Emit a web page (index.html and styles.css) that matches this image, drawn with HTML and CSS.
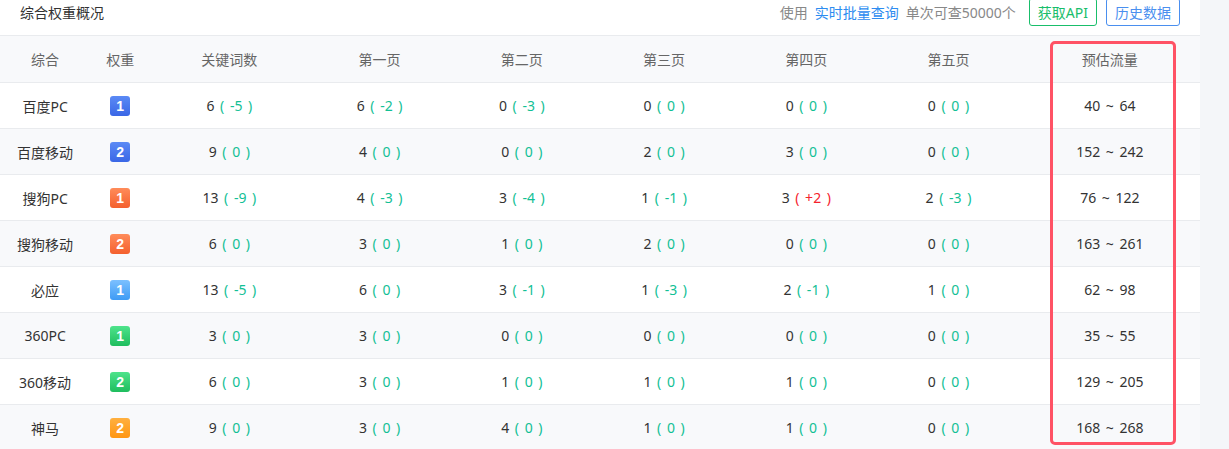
FILE: index.html
```html
<!DOCTYPE html>
<html lang="zh">
<head>
<meta charset="utf-8">
<link rel="stylesheet" href="styles.css">
</head>
<body>
<div class="page">
  <div class="panel">
    <div class="titlebar">
      <div class="title">综合权重概况</div>
      <div class="tools">
        <span class="hint">使用<a class="link">实时批量查询</a>单次可查50000个</span>
        <span class="btn btn-green">获取API</span>
        <span class="btn btn-blue">历史数据</span>
      </div>
    </div>
    <table class="grid">
      <colgroup>
        <col class="c1"><col class="c2"><col class="c3"><col class="c4"><col class="c4"><col class="c4"><col class="c4"><col class="c4"><col class="c9">
      </colgroup>
      <thead>
        <tr><th>综合</th><th>权重</th><th>关键词数</th><th>第一页</th><th>第二页</th><th>第三页</th><th>第四页</th><th>第五页</th><th>预估流量</th></tr>
      </thead>
      <tbody>
        <tr><td>百度PC</td><td><span class="badge b-blue">1</span></td><td>6 <span class="g">( -5 )</span></td><td>6 <span class="g">( -2 )</span></td><td>0 <span class="g">( -3 )</span></td><td>0 <span class="g">( 0 )</span></td><td>0 <span class="g">( 0 )</span></td><td>0 <span class="g">( 0 )</span></td><td>40 ~ 64</td></tr>
        <tr><td>百度移动</td><td><span class="badge b-blue">2</span></td><td>9 <span class="g">( 0 )</span></td><td>4 <span class="g">( 0 )</span></td><td>0 <span class="g">( 0 )</span></td><td>2 <span class="g">( 0 )</span></td><td>3 <span class="g">( 0 )</span></td><td>0 <span class="g">( 0 )</span></td><td>152 ~ 242</td></tr>
        <tr><td>搜狗PC</td><td><span class="badge b-orange">1</span></td><td>13 <span class="g">( -9 )</span></td><td>4 <span class="g">( -3 )</span></td><td>3 <span class="g">( -4 )</span></td><td>1 <span class="g">( -1 )</span></td><td>3 <span class="r">( +2 )</span></td><td>2 <span class="g">( -3 )</span></td><td>76 ~ 122</td></tr>
        <tr><td>搜狗移动</td><td><span class="badge b-orange">2</span></td><td>6 <span class="g">( 0 )</span></td><td>3 <span class="g">( 0 )</span></td><td>1 <span class="g">( 0 )</span></td><td>2 <span class="g">( 0 )</span></td><td>0 <span class="g">( 0 )</span></td><td>0 <span class="g">( 0 )</span></td><td>163 ~ 261</td></tr>
        <tr><td>必应</td><td><span class="badge b-sky">1</span></td><td>13 <span class="g">( -5 )</span></td><td>6 <span class="g">( 0 )</span></td><td>3 <span class="g">( -1 )</span></td><td>1 <span class="g">( -3 )</span></td><td>2 <span class="g">( -1 )</span></td><td>1 <span class="g">( 0 )</span></td><td>62 ~ 98</td></tr>
        <tr><td>360PC</td><td><span class="badge b-green">1</span></td><td>3 <span class="g">( 0 )</span></td><td>3 <span class="g">( 0 )</span></td><td>0 <span class="g">( 0 )</span></td><td>0 <span class="g">( 0 )</span></td><td>0 <span class="g">( 0 )</span></td><td>0 <span class="g">( 0 )</span></td><td>35 ~ 55</td></tr>
        <tr><td>360移动</td><td><span class="badge b-green">2</span></td><td>6 <span class="g">( 0 )</span></td><td>3 <span class="g">( 0 )</span></td><td>1 <span class="g">( 0 )</span></td><td>1 <span class="g">( 0 )</span></td><td>1 <span class="g">( 0 )</span></td><td>0 <span class="g">( 0 )</span></td><td>129 ~ 205</td></tr>
        <tr><td>神马</td><td><span class="badge b-amber">2</span></td><td>9 <span class="g">( 0 )</span></td><td>3 <span class="g">( 0 )</span></td><td>4 <span class="g">( 0 )</span></td><td>1 <span class="g">( 0 )</span></td><td>1 <span class="g">( 0 )</span></td><td>0 <span class="g">( 0 )</span></td><td>168 ~ 268</td></tr>
      </tbody>
    </table>
    <div class="highlight"></div>
  </div>
</div>
</body>
</html>
```

FILE: styles.css
```css
html, body {
  margin: 0;
  padding: 0;
  background: #f4f6f9;
}
body {
  font-family: "Noto Sans", "Noto Sans CJK SC", sans-serif;
  font-size: 14px;
  color: #333;
  overflow: hidden;
}
.page {
  width: 1229px;
  height: 449px;
  overflow: hidden;
}
.panel {
  position: relative;
  width: 1200px;
  background: #fff;
}
.titlebar {
  height: 36px;
  box-sizing: border-box;
  padding: 0 20px;
  display: flex;
  justify-content: space-between;
  align-items: flex-start;
  border-bottom: 1px solid #e9ebee;
}
.title {
  line-height: 26px;
  font-size: 14px;
  color: #333;
}
.tools {
  display: flex;
  align-items: flex-start;
}
.hint {
  line-height: 26px;
  font-size: 14px;
  color: #888;
  margin-right: 13px;
}
.link {
  color: #2d8cf0;
  margin: 0 7px;
}
.btn {
  box-sizing: border-box;
  height: 28px;
  margin-top: -2px;
  padding: 0 8px;
  line-height: 27px;
  border: 1px solid;
  border-radius: 3px;
  font-size: 14px;
}
.btn-green {
  color: #19be6b;
  border-color: #19be6b;
  margin-right: 9px;
}
.btn-blue {
  color: #4a8fef;
  border-color: #4a8fef;
}
.grid {
  width: 1200px;
  border-collapse: collapse;
  table-layout: fixed;
  word-spacing: 2px;
}
.c1 { width: 90px; }
.c2 { width: 60px; }
.c3 { width: 158px; }
.c4 { width: 142px; }
.c9 { width: 180px; }
.grid th, .grid td {
  height: 45px;
  padding: 0;
  text-align: center;
  border-bottom: 1px solid #e9ebee;
  font-weight: normal;
  white-space: nowrap;
}
.grid th {
  height: 46px;
  background: #f8f9fb;
  color: #666;
}
.grid td {
  color: #333;
}
.grid tbody tr:nth-child(even) td {
  background: #f8f9fb;
}
.g { color: #12c095; }
.r { color: #f5222d; }
.badge {
  display: inline-block;
  width: 20px;
  height: 20px;
  line-height: 20px;
  border-radius: 3px;
  color: #fff;
  font-weight: bold;
  font-size: 14px;
  vertical-align: middle;
  font-family: "Liberation Sans", sans-serif;
}
.b-blue { background: linear-gradient(#5b8af5, #3a67e6); }
.b-orange { background: linear-gradient(#ff8c5a, #f4602e); }
.b-sky { background: linear-gradient(#7cc0ff, #3e9bf5); }
.b-green { background: linear-gradient(#4ee38b, #1fbd5e); }
.b-amber { background: linear-gradient(#ffb040, #ff9612); }
.highlight {
  position: absolute;
  left: 1050px;
  top: 41px;
  width: 126px;
  height: 404px;
  box-sizing: border-box;
  border: 3px solid #ff5265;
  border-radius: 5px;
}
```
